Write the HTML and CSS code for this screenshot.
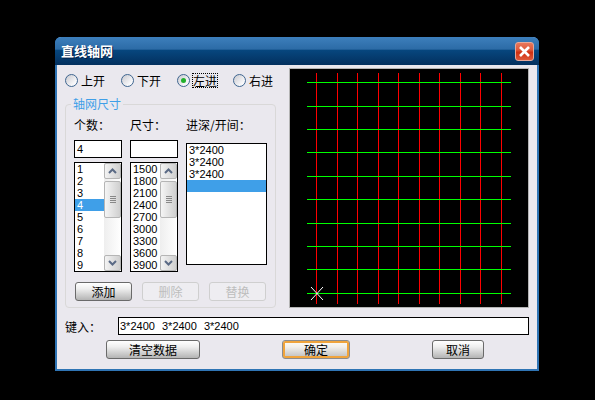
FILE: index.html
```html
<!DOCTYPE html>
<html lang="zh">
<head>
<meta charset="utf-8">
<title>直线轴网</title>
<link rel="stylesheet" href="styles.css">
</head>
<body>
<div class="window">
  <div class="titlebar">
    <span class="title">直线轴网</span>
    <span class="close"><svg width="13" height="13" viewBox="0 0 13 13"><path d="M2 2L11 11M11 2L2 11" stroke="#fff" stroke-width="2.6"/></svg></span>
  </div>
  <div class="client">
    <div class="main">
      <div class="left">
        <div class="radios">
          <label class="radio"><i class="dot"></i><span>上开</span></label>
          <label class="radio"><i class="dot"></i><span>下开</span></label>
          <label class="radio"><i class="dot on"></i><span class="focus">左进</span></label>
          <label class="radio"><i class="dot"></i><span>右进</span></label>
        </div>
        <fieldset class="group">
          <legend>轴网尺寸</legend>
          <div class="cols">
            <div class="col">
              <div class="cap">个数：</div>
              <div class="field num">4</div>
              <div class="list">
                <div class="items">
                  <div>1</div><div>2</div><div>3</div><div class="sel">4</div><div>5</div><div>6</div><div>7</div><div>8</div><div>9</div>
                </div>
                <div class="scroll">
                  <div class="arrow"><svg width="9" height="6" viewBox="0 0 9 6"><path d="M1 5L4.500 1.500L8 5" fill="none" stroke="#5a6a85" stroke-width="2"/></svg></div>
                  <div class="thumb"><i></i><i></i><i></i><i></i></div>
                  <div class="track"></div>
                  <div class="arrow"><svg width="9" height="6" viewBox="0 0 9 6"><path d="M1 1L4.500 4.500L8 1" fill="none" stroke="#5a6a85" stroke-width="2"/></svg></div>
                </div>
              </div>
            </div>
            <div class="col">
              <div class="cap">尺寸：</div>
              <div class="field num"></div>
              <div class="list">
                <div class="items">
                  <div>1500</div><div>1800</div><div>2100</div><div>2400</div><div>2700</div><div>3000</div><div>3300</div><div>3600</div><div>3900</div>
                </div>
                <div class="scroll">
                  <div class="arrow"><svg width="9" height="6" viewBox="0 0 9 6"><path d="M1 5L4.500 1.500L8 5" fill="none" stroke="#5a6a85" stroke-width="2"/></svg></div>
                  <div class="thumb"><i></i><i></i><i></i><i></i></div>
                  <div class="track"></div>
                  <div class="arrow"><svg width="9" height="6" viewBox="0 0 9 6"><path d="M1 1L4.500 4.500L8 1" fill="none" stroke="#5a6a85" stroke-width="2"/></svg></div>
                </div>
              </div>
            </div>
            <div class="col wide">
              <div class="cap">进深/开间：</div>
              <div class="list tall">
                <div class="items">
                  <div>3*2400</div><div>3*2400</div><div>3*2400</div><div class="sel">&nbsp;</div>
                </div>
              </div>
            </div>
          </div>
          <div class="actions">
            <button class="btn small">添加</button>
            <button class="btn small off">删除</button>
            <button class="btn small off">替换</button>
          </div>
        </fieldset>
      </div>
      <div class="canvas">
        <svg width="238" height="238" viewBox="0 0 238 238" shape-rendering="crispEdges">
          <path stroke="#f00" stroke-width="1" d="M26.500 4V235M47.500 4V235M67.500 4V235M88.500 4V235M108.500 4V235M129.500 4V235M149.500 4V235M170.500 4V235M190.500 4V235M211.500 4V235"/>
          <path stroke="#0f0" stroke-width="1" d="M17 13.500H221M17 37.500H221M17 60.500H221M17 83.500H221M17 107.500H221M17 130.500H221M17 154.500H221M17 177.500H221M17 200.500H221M17 224.500H221"/>
          <path stroke="#fff" stroke-width="1" shape-rendering="geometricPrecision" d="M21 218L33 231M33 218L21 231"/>
        </svg>
      </div>
    </div>
    <div class="entry">
      <span class="entry-label">键入：</span>
      <div class="field line">3*2400  3*2400  3*2400</div>
    </div>
    <div class="footer">
      <button class="btn w94">清空数据</button>
      <button class="btn w68 default">确定</button>
      <button class="btn w52">取消</button>
    </div>
  </div>
</div>
</body>
</html>
```
FILE: styles.css
```css
* { box-sizing: border-box; }
html, body { margin: 0; padding: 0; height: 100%; background: #000; overflow: hidden; }
body {
  padding: 37px 0 0 55px;
  font-family: "Liberation Sans", "Noto Sans CJK SC", sans-serif;
  font-size: 12px;
  color: #000;
}
.window {
  width: 484px;
  height: 334px;
  display: flex;
  flex-direction: column;
  border: 2px solid #2f74b4;
  border-top-width: 0;
  border-radius: 6px 6px 0 0;
  background: #eae8ee;
}
.titlebar {
  flex: none;
  height: 28px;
  margin: 0 -2px;
  padding: 0 5px 0 6px;
  display: flex;
  align-items: center;
  justify-content: space-between;
  border-radius: 6px 6px 0 0;
  background: linear-gradient(#3d7fbc 0, #2c6ba6 44%, #07477f 46%, #03305e 100%);
}
.title {
  font-family: "Noto Sans CJK SC", sans-serif;
  font-size: 13px;
  font-weight: 700;
  color: #fff;
  line-height: 16px;
  text-shadow: 1px 1px 0 #02214a;
}
.close {
  width: 19px;
  height: 19px;
  margin-top: 1px;
  display: flex;
  align-items: center;
  justify-content: center;
  border: 1px solid #e6a899;
  border-radius: 3px;
  background: linear-gradient(#e8775c 0, #de5a3c 40%, #cf2f10 55%, #e0593a 100%);
}
.client {
  flex: 1;
  padding: 3px 8px 0;
  display: flex;
  flex-direction: column;
}
.main { display: flex; gap: 13px; }
.left { width: 211px; flex: none; }
.radios { display: flex; margin-top: 6px; height: 13px; }
.radio { flex: none; width: 56px; display: flex; align-items: center; gap: 3px; font-family: "Noto Sans CJK SC", sans-serif; line-height: 13px; }
.dot {
  width: 13px;
  height: 13px;
  flex: none;
  display: flex;
  align-items: center;
  justify-content: center;
  border: 1px solid #3f6690;
  border-radius: 50%;
  background: linear-gradient(135deg, #c9c9cf, #f8f8fa 75%);
}
.dot.on::after {
  content: "";
  width: 5px;
  height: 5px;
  border-radius: 50%;
  background: #22b02c;
}
.focus { outline: 1px dotted #000; outline-offset: 0; }
.group {
  margin: 10px 0 0;
  padding: 7px 8px 7px 8px;
  min-width: 0;
  height: 211px;
  border: 1px solid #d9d8d8;
  border-radius: 4px;
}
.group legend {
  margin-left: -3px;
  padding: 0 2px;
  font-family: "Noto Sans CJK SC", sans-serif;
  line-height: 14px;
  color: #3f9fe8;
}
.cols { display: flex; gap: 8px; }
.col { width: 48px; display: flex; flex-direction: column; }
.col.wide { width: 81px; }
.cap { height: 14px; line-height: 14px; white-space: nowrap; font-family: "Noto Sans CJK TC", sans-serif; }
.field { border: 1px solid #000; background: #fff; }
.num { height: 18px; margin-top: 8px; padding-left: 2px; line-height: 16px; font-size: 11px; }
.list {
  display: flex;
  height: 110px;
  margin-top: 4px;
  border: 1px solid #000;
  background: #fff;
  font-size: 11px;
}
.list.tall { height: 122px; margin-top: 11px; }
.items { flex: 1; min-width: 0; }
.items div { height: 12px; line-height: 12px; padding-left: 2px; white-space: nowrap; }
.items .sel { background: #3f9fe8; color: #fff; }
.scroll {
  flex: none;
  width: 17px;
  display: flex;
  flex-direction: column;
  background: linear-gradient(90deg, #eeeeee, #ffffff);
}
.arrow {
  flex: none;
  height: 16px;
  display: flex;
  align-items: center;
  justify-content: center;
  border: 1px solid #b5b5b5;
  border-radius: 2px;
  background: linear-gradient(90deg, #f3f3f3, #cfcfcf);
}
.thumb {
  flex: none;
  height: 37px;
  margin-top: 2px;
  display: flex;
  flex-direction: column;
  align-items: center;
  justify-content: center;
  gap: 1px;
  border: 1px solid #b5b5b5;
  border-radius: 2px;
  background: linear-gradient(90deg, #f5f5f5, #cfcfcf);
}
.thumb i { width: 6px; height: 1px; background: #888; }
.track { flex: 1; }
.actions { display: flex; gap: 10px; margin: 10px 0 0 1px; }
.btn {
  padding: 0;
  height: 19px;
  font-family: "Noto Sans CJK SC", sans-serif;
  font-size: 12px;
  line-height: 17px;
  color: #000;
  border: 1px solid #6a6a6a;
  border-radius: 3px;
  background: linear-gradient(#ffffff 0, #eeeeee 35%, #b4b4b4 100%);
}
.small { width: 57px; }
.off { color: #bdbdbd; border-color: #cfcfcf; background: #eeedf1; }
.w94 { width: 94px; }
.w68 { width: 68px; }
.w52 { width: 52px; }
.default {
  border-color: #8c8c8c;
  box-shadow: inset 0 0 0 2px #f0a43c;
  background: linear-gradient(#fffdf5 0, #f2f0ec 35%, #bcbcbc 100%);
}
.canvas {
  flex: none;
  width: 240px;
  height: 240px;
  border: 1px solid #b4b4b4;
  background: #000;
}
.canvas svg { display: block; }
.entry { display: flex; align-items: center; margin-top: 9px; }
.entry-label { width: 53px; font-family: "Noto Sans CJK TC", sans-serif; }
.line {
  width: 411px;
  height: 18px;
  padding-left: 1px;
  line-height: 16px;
  font-size: 11px;
  white-space: pre;
  word-spacing: .5px;
}
.footer { display: flex; gap: 82px; margin: 5px 0 0 41px; }
```
